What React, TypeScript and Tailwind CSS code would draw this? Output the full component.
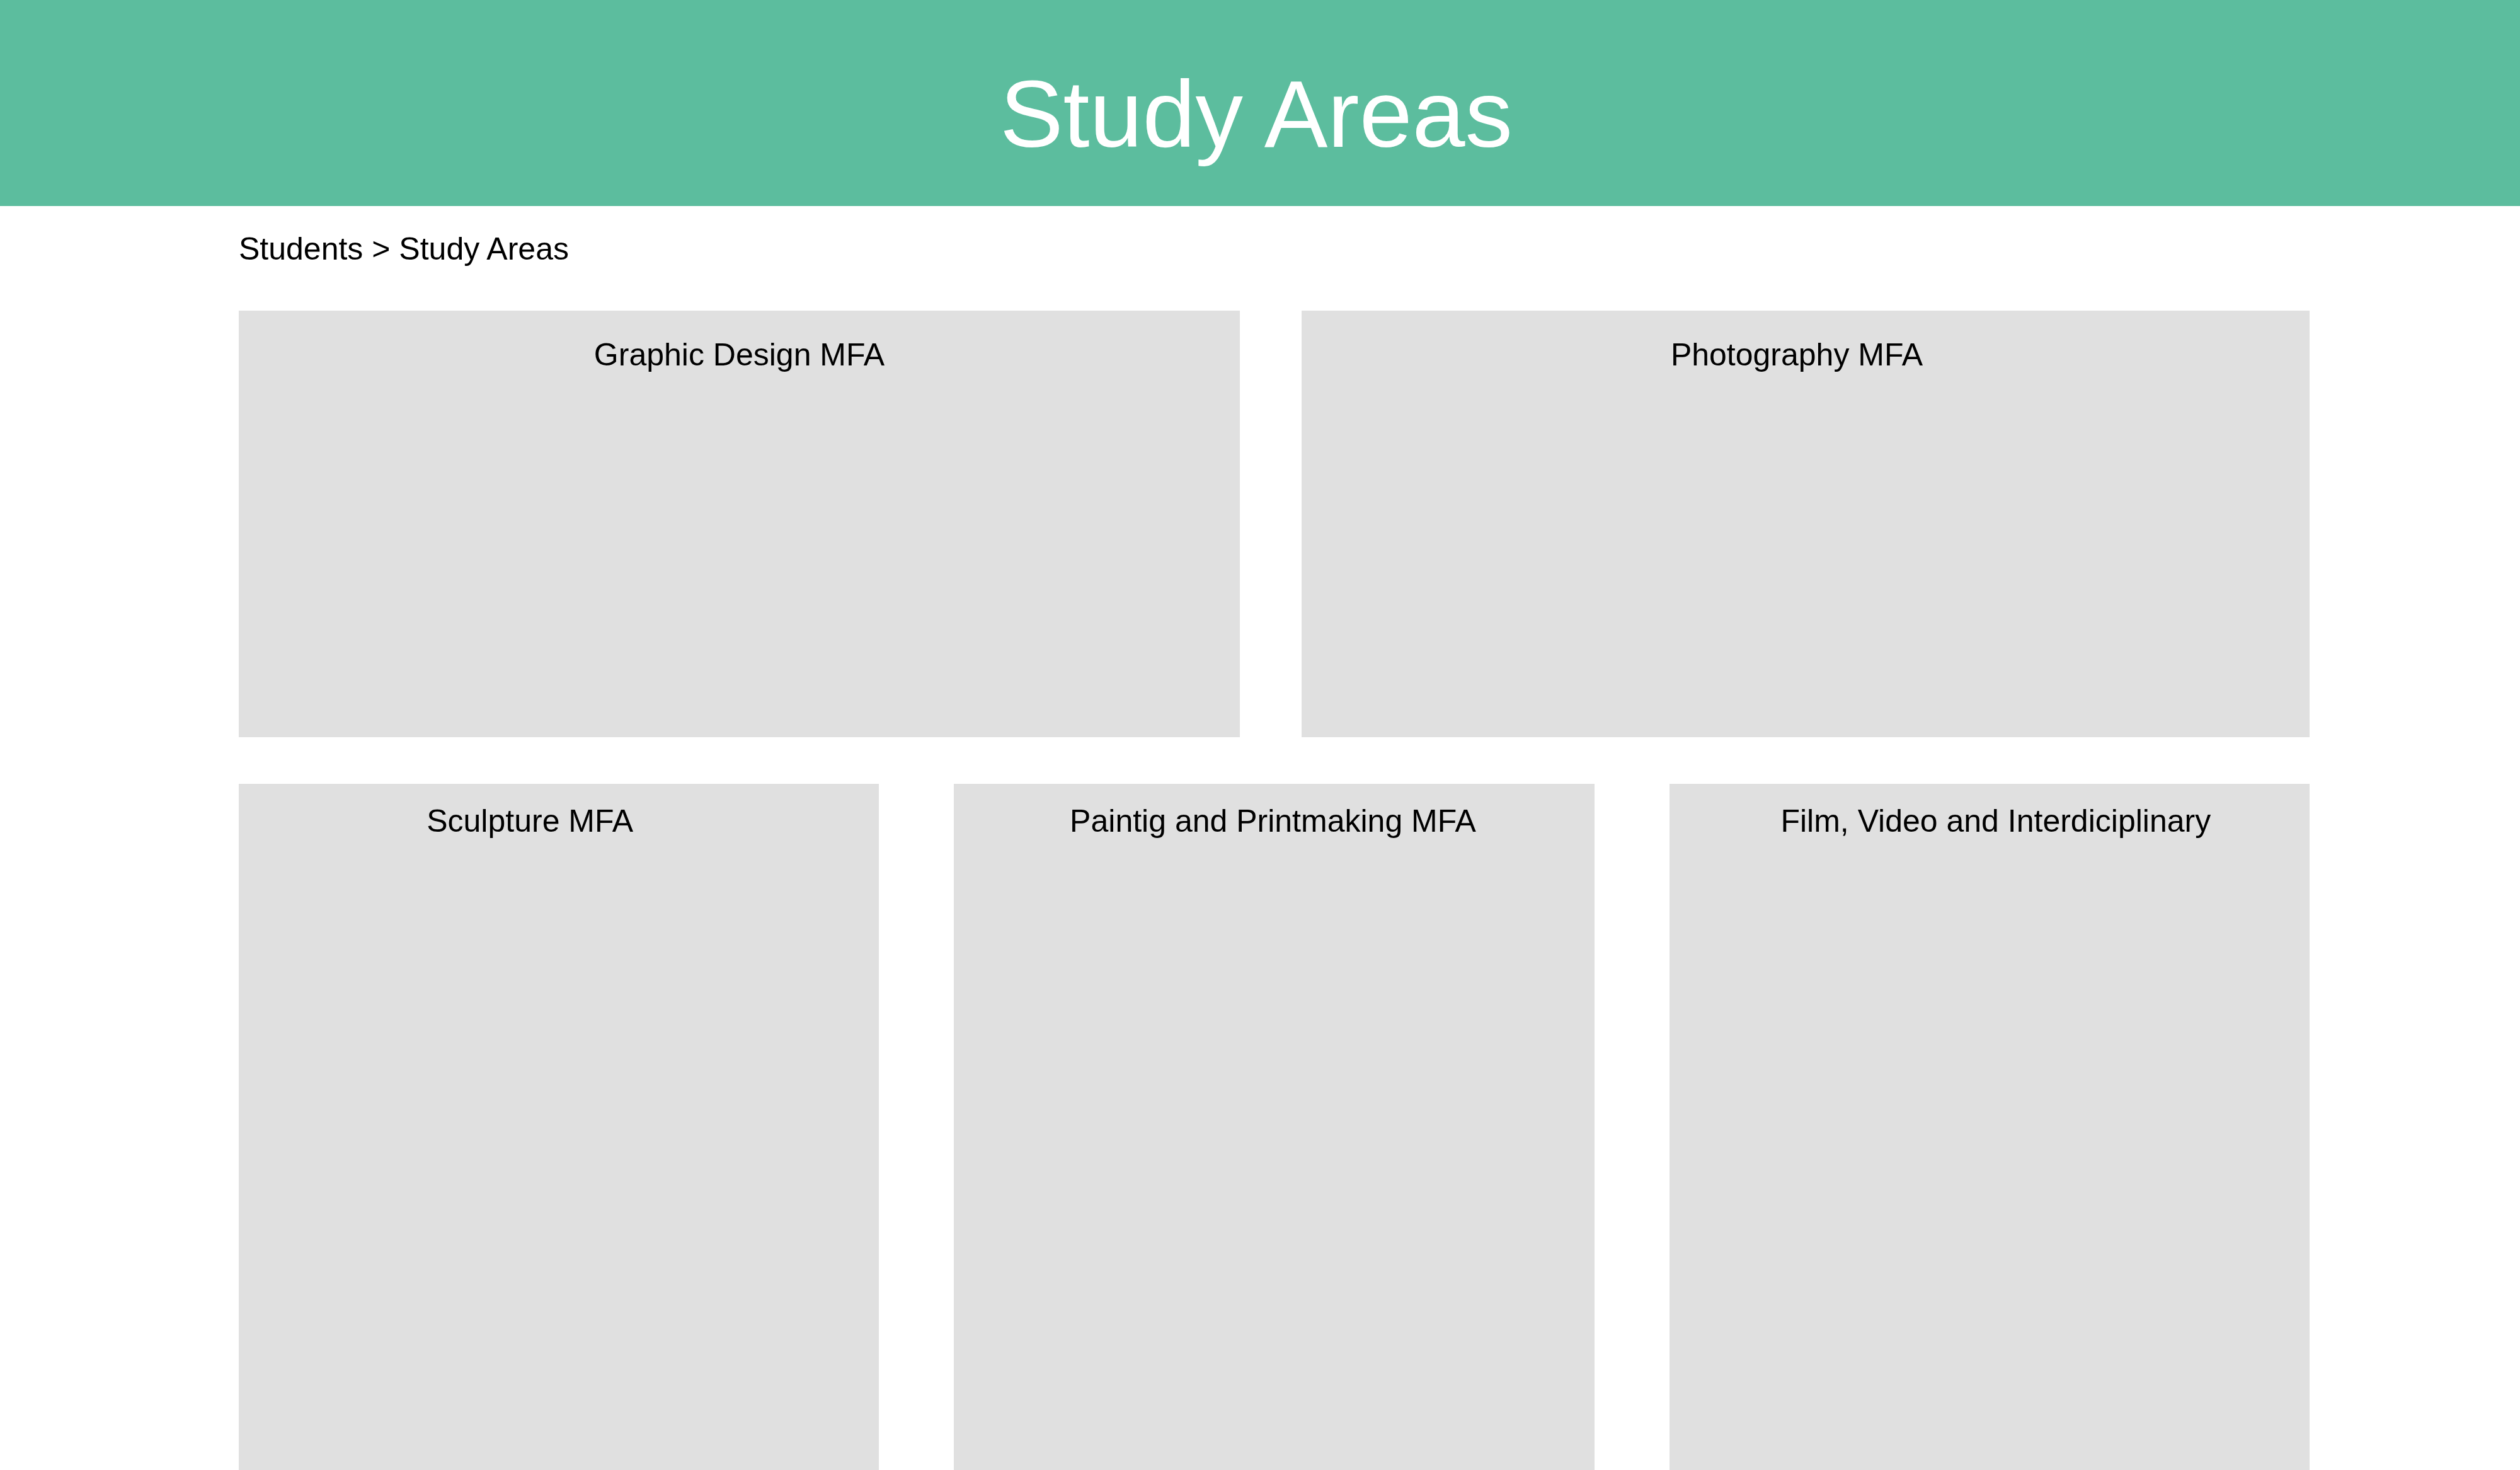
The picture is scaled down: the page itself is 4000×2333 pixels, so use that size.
const FONT = "font-['Liberation_Sans',Arial,sans-serif]";

type Area = { name: string; pad: string };

const TOP: Area[] = [
  { name: "Graphic Design MFA", pad: "" },
  { name: "Photography MFA", pad: "pr-[28px]" },
];

const BOTTOM: Area[] = [
  { name: "Sculpture MFA", pad: "pr-[92px]" },
  { name: "Paintig and Printmaking MFA", pad: "pr-[4px]" },
  { name: "Film, Video and Interdiciplinary", pad: "pl-[20px]" },
];

function AreaCard({ area, className }: { area: Area; className: string }) {
  return (
    <div className={`bg-[#e0e0e0] ${className}`}>
      <p className={`text-center text-[50px] leading-none text-black ${area.pad}`}>
        {area.name}
      </p>
    </div>
  );
}

export default function App() {
  return (
    <div className={`min-h-screen bg-white ${FONT}`}>
      <header className="h-[327px] bg-[#5cbd9e] pt-[105px]">
        <h1 className="pr-[12px] text-center text-[151px] leading-none font-normal text-white">
          Study Areas
        </h1>
      </header>

      <main className="ml-[379px] w-[3287px]">
        <nav className="mt-[43px] text-[50px] leading-none text-black">
          Students &gt; Study Areas
        </nav>

        {/* top row: two wide cards */}
        <div className="mt-[73px] grid grid-cols-[1589px_1fr] gap-[98px]">
          {TOP.map((a) => (
            <AreaCard key={a.name} area={a} className="h-[677px] pt-[45px]" />
          ))}
        </div>

        {/* bottom row: three tall cards */}
        <div className="mt-[74px] grid grid-cols-3 gap-[119px]">
          {BOTTOM.map((a) => (
            <AreaCard key={a.name} area={a} className="h-[1150px] pt-[34px]" />
          ))}
        </div>
      </main>
    </div>
  );
}
